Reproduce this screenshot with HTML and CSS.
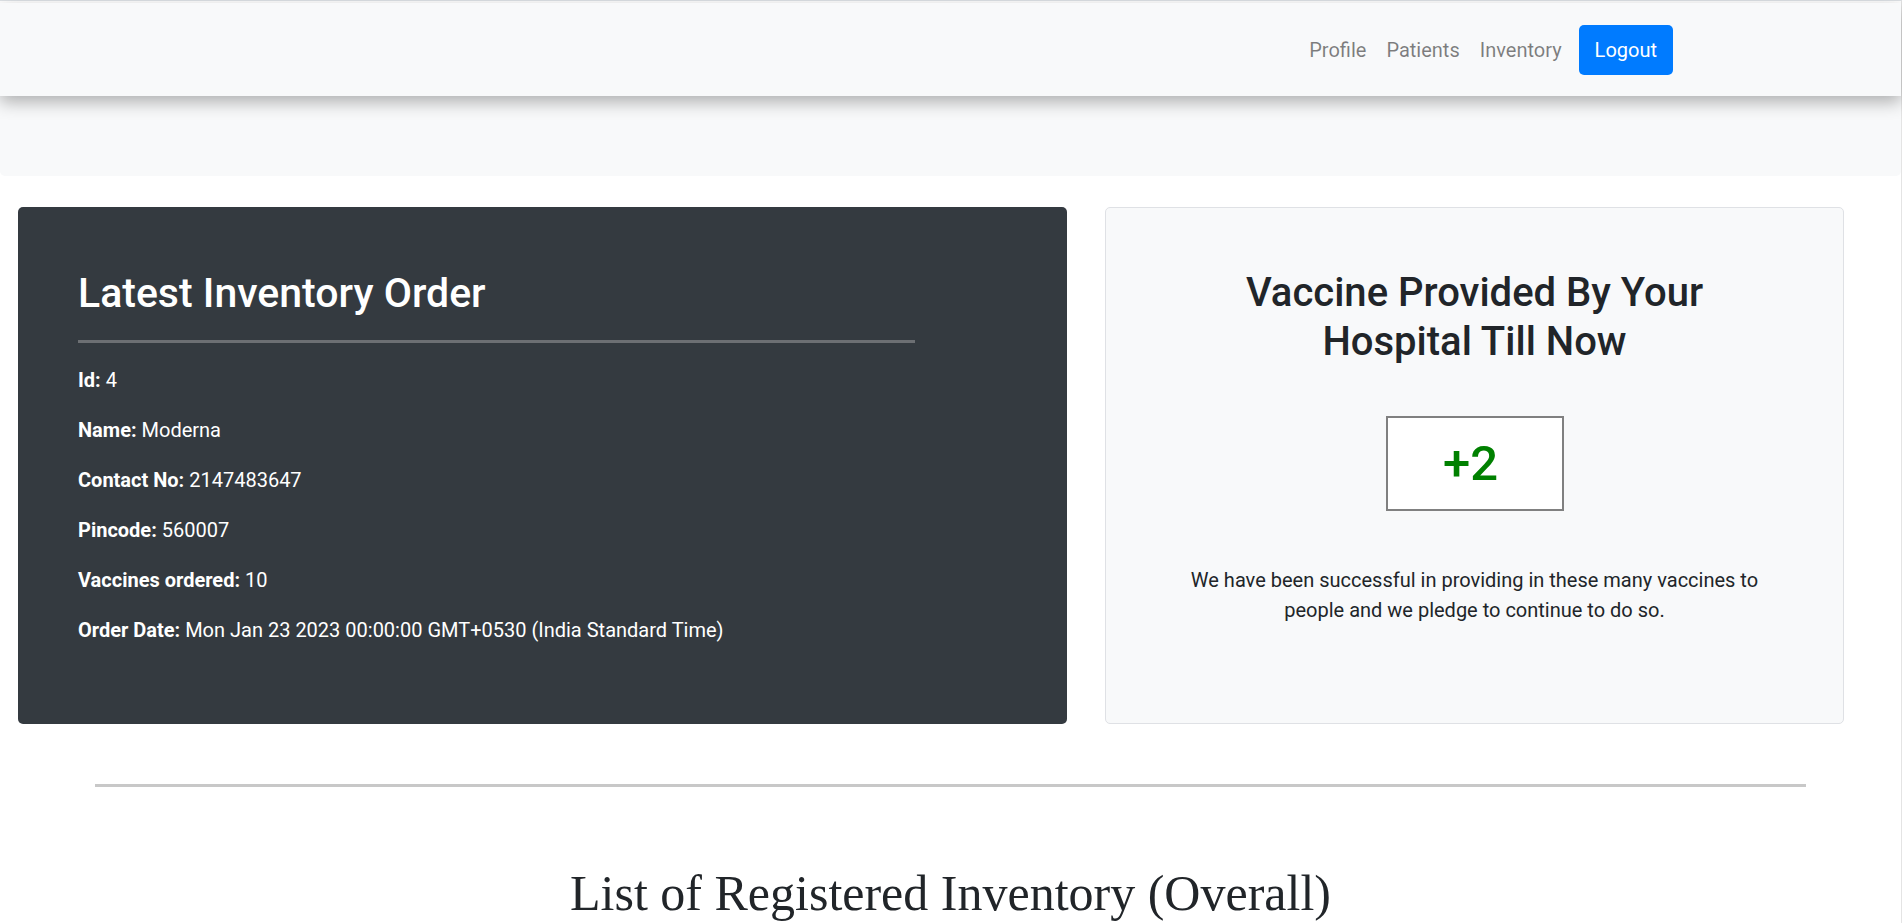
FILE: index.html
```html
<!DOCTYPE html>
<html lang="en">
<head>
<meta charset="utf-8">
<title>Inventory</title>
<link rel="stylesheet" href="styles.css">
</head>
<body>
<div class="page">
  <header class="hero">
    <nav class="navbar">
      <a class="nav-link" href="#">Profile</a>
      <a class="nav-link" href="#">Patients</a>
      <a class="nav-link" href="#">Inventory</a>
      <button class="btn-logout" type="button">Logout</button>
    </nav>
  </header>

  <main class="cards">
    <section class="card card-dark">
      <h2 class="card-title">Latest Inventory Order</h2>
      <hr class="card-rule">
      <p class="field"><b>Id:</b> 4</p>
      <p class="field"><b>Name:</b> Moderna</p>
      <p class="field"><b>Contact No:</b> 2147483647</p>
      <p class="field"><b>Pincode:</b> 560007</p>
      <p class="field"><b>Vaccines ordered:</b> 10</p>
      <p class="field"><b>Order Date:</b> Mon Jan 23 2023 00:00:00 GMT+0530 (India Standard Time)</p>
    </section>

    <section class="card card-light">
      <h2 class="stat-title">Vaccine Provided By Your Hospital Till Now</h2>
      <div class="count">+2</div>
      <p class="stat-text">We have been successful in providing in these many vaccines to people and we pledge to continue to do so.</p>
    </section>
  </main>

  <hr class="divider">
  <h1 class="list-title">List of Registered Inventory (Overall)</h1>
</div>
</body>
</html>
```

FILE: styles.css
```css
html, body {
  margin: 0;
  padding: 0;
  background: #ffffff;
}

body {
  font-family: "Segoe UI", Roboto, "Noto Sans", "Liberation Sans", sans-serif;
  font-size: 20px;
  line-height: 1.5;
  color: #212529;
  overflow: hidden;
}

.page {
  padding-top: 2px;
  border-top: 1px solid #dee2e6;
  border-right: 1px solid #e4e4e4;
  min-height: 920px;
}

/* header */
.hero {
  background: #f8f9fa;
  border-radius: 0 0 5px 5px;
  padding-bottom: 80px;
}

.navbar {
  position: relative;
  height: 93px;
  display: flex;
  align-items: center;
  justify-content: flex-end;
  padding-right: 228px;
  background: #f8f9fa;
  box-shadow: 0 6px 16px rgba(0, 0, 0, 0.3);
}

.nav-link {
  padding: 0 10px;
  color: rgba(0, 0, 0, 0.5);
  text-decoration: none;
  font-size: 20px;
  line-height: 30px;
}

.btn-logout {
  margin-left: 7px;
  padding: 10px 16px;
  border: none;
  border-radius: 5px;
  background: #007bff;
  color: #ffffff;
  font-family: inherit;
  font-size: 20px;
  line-height: 30px;
}

/* cards */
.cards {
  display: grid;
  grid-template-columns: 1049px 739px;
  column-gap: 38px;
  padding-left: 18px;
  margin-top: 31px;
}

.card {
  box-sizing: border-box;
  border-radius: 5px;
}

.card-dark {
  background: #343a40;
  color: #ffffff;
  padding: 62px 60px 59px;
}

.card-title {
  margin: 0;
  font-size: 41px;
  line-height: 48px;
  font-weight: 500;
}

.card-rule {
  width: 837px;
  margin: 23px 0 22px;
  height: 3px;
  border: none;
  background: #6c6f73;
}

.field {
  margin: 0 0 20px;
  font-size: 20px;
  line-height: 30px;
}

.field b {
  font-weight: 700;
}

.card-light {
  background: #f8f9fa;
  border: 1px solid #dfe1e5;
  padding: 61px 60px 60px;
  display: flex;
  flex-direction: column;
  align-items: center;
  text-align: center;
}

.stat-title {
  margin: 0;
  max-width: 540px;
  font-size: 40px;
  line-height: 48.5px;
  font-weight: 500;
  color: #212529;
}

.count {
  box-sizing: border-box;
  width: 178px;
  height: 95px;
  margin-top: 50px;
  padding-right: 8px;
  display: flex;
  align-items: center;
  justify-content: center;
  background: #ffffff;
  border: 2px solid #808080;
  color: #008000;
  font-size: 49px;
  line-height: 1;
  font-weight: 500;
}

.stat-text {
  margin: 54px 0 0;
  max-width: 600px;
  font-size: 20px;
  line-height: 30px;
}

/* bottom */
.divider {
  width: 1711px;
  height: 3px;
  margin: 60px auto 0;
  border: none;
  background: #c8c8c8;
}

.list-title {
  margin: 76px 0 0;
  text-align: center;
  font-family: "Liberation Serif", "Times New Roman", serif;
  font-size: 50px;
  line-height: 1.2;
  font-weight: 400;
  color: #212529;
}
```
